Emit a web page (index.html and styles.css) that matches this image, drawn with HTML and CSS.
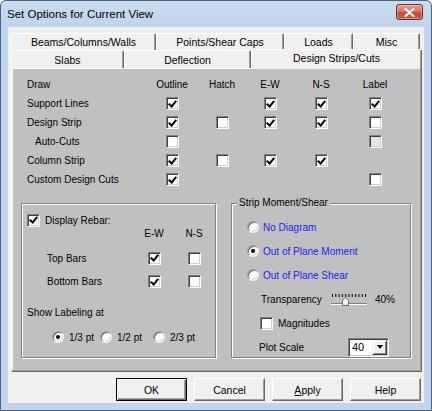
FILE: index.html
```html
<!DOCTYPE html>
<html>
<head>
<meta charset="utf-8">
<title>Set Options for Current View</title>
<link rel="stylesheet" href="styles.css">
</head>
<body>
<div class="window">
  <div class="titlebar">
    <span class="title">Set Options for Current View</span>
    <span class="close"><svg width="11" height="9" viewBox="0 0 11 9"><path d="M1.5 1 L9.5 8 M9.5 1 L1.5 8" stroke="#fff" stroke-width="2.2" stroke-linecap="round"/></svg></span>
  </div>
  <div class="client">
    <div class="tabctl">
      <div class="tabrow back">
        <div class="tab t-beams">Beams/Columns/Walls</div>
        <div class="tab t-points">Points/Shear Caps</div>
        <div class="tab t-loads">Loads</div>
        <div class="tab t-misc">Misc</div>
      </div>
      <div class="tabrow front">
        <div class="tab t-slabs">Slabs</div>
        <div class="tab t-defl">Deflection</div>
        <div class="tab t-design sel">Design Strips/Cuts</div>
      </div>
      <div class="panel">
        <div class="sheet">
          <div class="draw">
            <div class="lbl">Draw</div><div class="hd">Outline</div><div class="hd">Hatch</div><div class="hd">E-W</div><div class="hd">N-S</div><div class="hd">Label</div>

            <div class="lbl">Support Lines</div><div class="c"><span class="cb on"></span></div><div class="c"></div><div class="c"><span class="cb on"></span></div><div class="c"><span class="cb on"></span></div><div class="c"><span class="cb on"></span></div>

            <div class="lbl">Design Strip</div><div class="c"><span class="cb on"></span></div><div class="c"><span class="cb"></span></div><div class="c"><span class="cb on"></span></div><div class="c"><span class="cb on"></span></div><div class="c"><span class="cb"></span></div>

            <div class="lbl ind">Auto-Cuts</div><div class="c"><span class="cb"></span></div><div class="c"></div><div class="c"></div><div class="c"></div><div class="c"><span class="cb dis"></span></div>

            <div class="lbl">Column Strip</div><div class="c"><span class="cb on"></span></div><div class="c"><span class="cb"></span></div><div class="c"><span class="cb on"></span></div><div class="c"><span class="cb on"></span></div><div class="c"></div>

            <div class="lbl">Custom Design Cuts</div><div class="c"><span class="cb on"></span></div><div class="c"></div><div class="c"></div><div class="c"></div><div class="c"><span class="cb"></span></div>
          </div>

          <div class="groups">
            <div class="grp grp-l">
              <div class="rebar-chk"><span class="cb on"></span><span>Display Rebar:</span></div>
              <div class="rebar-grid">
                <div></div><div class="hd top">E-W</div><div class="hd top">N-S</div>
                <div>Top Bars</div><div class="c"><span class="cb on"></span></div><div class="c"><span class="cb"></span></div>
                <div>Bottom Bars</div><div class="c"><span class="cb on"></span></div><div class="c"><span class="cb"></span></div>
              </div>
              <div class="show-lbl">Show Labeling at</div>
              <div class="radios">
                <div class="ropt"><span class="rd on"></span><span>1/3 pt</span></div>
                <div class="ropt"><span class="rd"></span><span>1/2 pt</span></div>
                <div class="ropt"><span class="rd"></span><span>2/3 pt</span></div>
              </div>
            </div>

            <div class="grp grp-r">
              <div class="gtitle">Strip Moment/Shear</div>
              <div class="rrows">
                <div class="rrow radio-row"><span class="rd"></span><span class="blue">No Diagram</span></div>
                <div class="rrow radio-row"><span class="rd on"></span><span class="blue">Out of Plane Moment</span></div>
                <div class="rrow radio-row"><span class="rd"></span><span class="blue">Out of Plane Shear</span></div>
                <div class="rrow trans-row">
                  <span class="tlabel">Transparency</span>
                  <svg class="slider" width="37" height="16" viewBox="0 0 37 16">
                    <g stroke="#000" stroke-width="1">
                      <path d="M1.5 3v3M4.8 3v3M8.1 3v3M11.4 3v3M14.7 3v3M18 3v3M21.3 3v3M24.6 3v3M27.9 3v3M31.2 3v3M34.5 3v3"/>
                    </g>
                    <path d="M0 12.5H36" stroke="#808080" stroke-width="1"/>
                    <path d="M0 13.5H36" stroke="#ffffff" stroke-width="1"/>
                    <path d="M11.5 14.5V9.5L14.5 6.5L17.5 9.5V14.5Z" fill="#f0f0f0" stroke="#696969" stroke-width="1"/>
                    <path d="M12.5 13.5V9.8L14.5 7.8" fill="none" stroke="#fff" stroke-width="1"/>
                  </svg>
                  <span class="pct">40%</span>
                </div>
                <div class="rrow mag-row"><span class="cb"></span><span>Magnitudes</span></div>
                <div class="rrow plot-row">
                  <span class="plabel">Plot Scale</span>
                  <span class="combo"><span class="cval">40</span><span class="drop"></span></span>
                </div>
              </div>
            </div>
          </div>
        </div>
      </div>
    </div>
    <div class="buttons">
      <div class="btn def">OK</div>
      <div class="btn">Cancel</div>
      <div class="btn"><span><u>A</u>pply</span></div>
      <div class="btn">Help</div>
    </div>
  </div>
</div>
</body>
</html>
```

FILE: styles.css
```css
* { box-sizing: border-box; }
html, body { margin: 0; padding: 0; }
body {
  width: 432px;
  height: 411px;
  overflow: hidden;
  background: #ffffff;
  font-family: "Liberation Sans", Arial, sans-serif;
  font-size: 10px;
  color: #000;
}

.window {
  width: 432px;
  height: 411px;
  border: 1px solid #4a6584;
  border-radius: 6px 6px 0 0;
  background: linear-gradient(#cbdcef, #bfd3ea 26px, #c2d5eb);
  display: flex;
  flex-direction: column;
  padding: 0 7px 7px 7px;
}

.titlebar {
  height: 26px;
  flex: none;
  display: flex;
  align-items: center;
  justify-content: space-between;
  margin: 0 -7px;
  padding: 0 8px 0 6px;
}
.title {
  font-size: 11.5px;
  color: #000;
  margin-top: -1px;
}
.close {
  align-self: flex-start;
  margin-top: 3px;
  width: 27px;
  height: 16px;
  border: 1px solid #6f2d26;
  border-radius: 3px;
  background: linear-gradient(#e7a092, #d77565 45%, #c44a39 55%, #cd5d4c);
  box-shadow: inset 0 0 0 1px rgba(255,255,255,0.3);
  display: flex;
  align-items: center;
  justify-content: center;
}

.client {
  flex: 1;
  background: #f0f0f0;
  display: flex;
  flex-direction: column;
  padding-bottom: 2px;
}

.tabctl { margin: 6px 2px 0 3px; }
.tabrow { display: flex; }
.back { height: 17px; }
.front { height: 18px; }
.tab {
  background: #f0f0f0;
  border-top: 1px solid #fff;
  border-left: 1px solid #fff;
  border-right: 1px solid #696969;
  box-shadow: inset -1px 0 #a0a0a0;
  border-radius: 2px 2px 0 0;
  display: flex;
  align-items: center;
  justify-content: center;
  font-size: 10.5px;
  white-space: nowrap;
}
.t-beams { width: 145px; }
.t-points { width: 128px; }
.t-loads { width: 69px; }
.t-misc { width: 67px; }
.t-slabs { width: 113px; }
.t-defl { width: 127px; }
.t-design { width: 171px; }
.tab.sel {
  height: 20px;
  margin-top: -1px;
  padding-bottom: 3px;
}

.panel {
  border-top: 1px solid #fff;
  border-left: 1px solid #fff;
  border-right: 1px solid #696969;
  border-bottom: 1px solid #696969;
  box-shadow: inset -1px -1px #a0a0a0;
  padding: 0 1px 1px 1px;
}
.sheet {
  background: #c0c0c0;
  height: 301px;
  padding: 6px 0 0 8px;
}

.draw {
  margin-left: 6px;
  display: grid;
  grid-template-columns: 125px 40px 60px 36px 66px 42px;
  grid-auto-rows: 19px;
  align-items: center;
}
.hd { text-align: center; }
.c { display: flex; justify-content: center; align-items: center; }
.ind { padding-left: 8px; }

.cb {
  width: 13px;
  height: 13px;
  flex: none;
  background: #fff;
  border: 1px solid;
  border-color: #808080 #fff #fff #808080;
  box-shadow: inset 1px 1px #404040, inset -1px -1px #d4d0c8;
  display: inline-flex;
  align-items: center;
  justify-content: center;
}
.cb.on::after {
  content: "";
  width: 3px;
  height: 6px;
  border: solid #000;
  border-width: 0 2px 2px 0;
  transform: rotate(40deg);
  margin-top: -2px;
}
.cb.dis { background: #e4e4e4; }

.rd {
  width: 12px;
  height: 12px;
  flex: none;
  border-radius: 50%;
  background: #fff;
  border: 1px solid;
  border-color: #9a9a9a #f4f4f4 #f4f4f4 #9a9a9a;
  box-shadow: inset 1px 1px #6a6a6a, inset -1px -1px #dcdcdc;
  display: inline-flex;
  align-items: center;
  justify-content: center;
}
.rd.on::after {
  content: "";
  width: 4px;
  height: 4px;
  border-radius: 50%;
  background: #000;
}

.groups {
  display: flex;
  gap: 15px;
  margin-top: 14px;
}
.grp {
  height: 155px;
  border: 1px solid #808080;
  box-shadow: inset 1px 1px #fff, 1px 1px #fff;
}
.grp-l { width: 195px; }
.grp-r { width: 180px; }

.rebar-chk {
  margin-top: 9px;
  height: 14px;
  padding-left: 5px;
  display: flex;
  align-items: center;
  gap: 5px;
}
.rebar-grid {
  padding-left: 25px;
  display: grid;
  grid-template-columns: 87px 40px 40px;
  grid-template-rows: 19px 24px 23px;
  align-items: center;
}
.rebar-grid .top { align-self: start; line-height: 14px; }
.show-lbl {
  margin-top: 13px;
  line-height: 14px;
  padding-left: 5px;
}
.radios {
  margin-top: 10px;
  height: 14px;
  padding-left: 30px;
  display: grid;
  grid-template-columns: 48px 53px auto;
  align-items: center;
}
.ropt { display: flex; align-items: center; gap: 5px; }

.gtitle {
  width: fit-content;
  margin: -7px 0 0 5px;
  padding: 0 2px;
  line-height: 12px;
  background: #c0c0c0;
}
.rrows {
  margin-top: 6px;
  display: flex;
  flex-direction: column;
}
.rrow {
  height: 24px;
  display: flex;
  align-items: center;
}
.radio-row { padding-left: 15px; gap: 4px; }
.blue { color: #1c1cf2; }
.trans-row { padding-left: 29px; }
.tlabel { width: 70px; }
.slider { display: block; }
.pct { margin-left: 7px; }
.mag-row { padding-left: 28px; gap: 5px; }
.plot-row { padding-left: 27px; }
.plabel { width: 89px; }

.combo {
  width: 41px;
  height: 19px;
  background: #fff;
  border: 1px solid;
  border-color: #808080 #fff #fff #808080;
  box-shadow: inset 1px 1px #404040, inset -1px -1px #d4d0c8;
  display: flex;
  align-items: center;
  justify-content: space-between;
  padding: 1px 1px 1px 3px;
  font-size: 11px;
}
.drop {
  width: 15px;
  height: 15px;
  background: #f0f0f0;
  border: 1px solid;
  border-color: #f0f0f0 #404040 #404040 #f0f0f0;
  box-shadow: inset 1px 1px #fff, inset -1px -1px #808080;
  display: flex;
  align-items: center;
  justify-content: center;
}
.drop::after {
  content: "";
  border-left: 3.5px solid transparent;
  border-right: 3.5px solid transparent;
  border-top: 4px solid #000;
}

.buttons {
  display: flex;
  justify-content: flex-end;
  gap: 7px;
  margin-top: 6px;
  padding-right: 3px;
}
.btn {
  width: 71px;
  height: 23px;
  background: #f0f0f0;
  border: 1px solid;
  border-color: #fff #696969 #696969 #fff;
  box-shadow: inset -1px -1px #a0a0a0;
  display: flex;
  align-items: center;
  justify-content: center;
  font-size: 10.5px;
}
.btn.def {
  border: 1px solid #000;
  box-shadow: inset 1px 1px #fff, inset -1px -1px #696969, inset -2px -2px #a0a0a0;
}
```
